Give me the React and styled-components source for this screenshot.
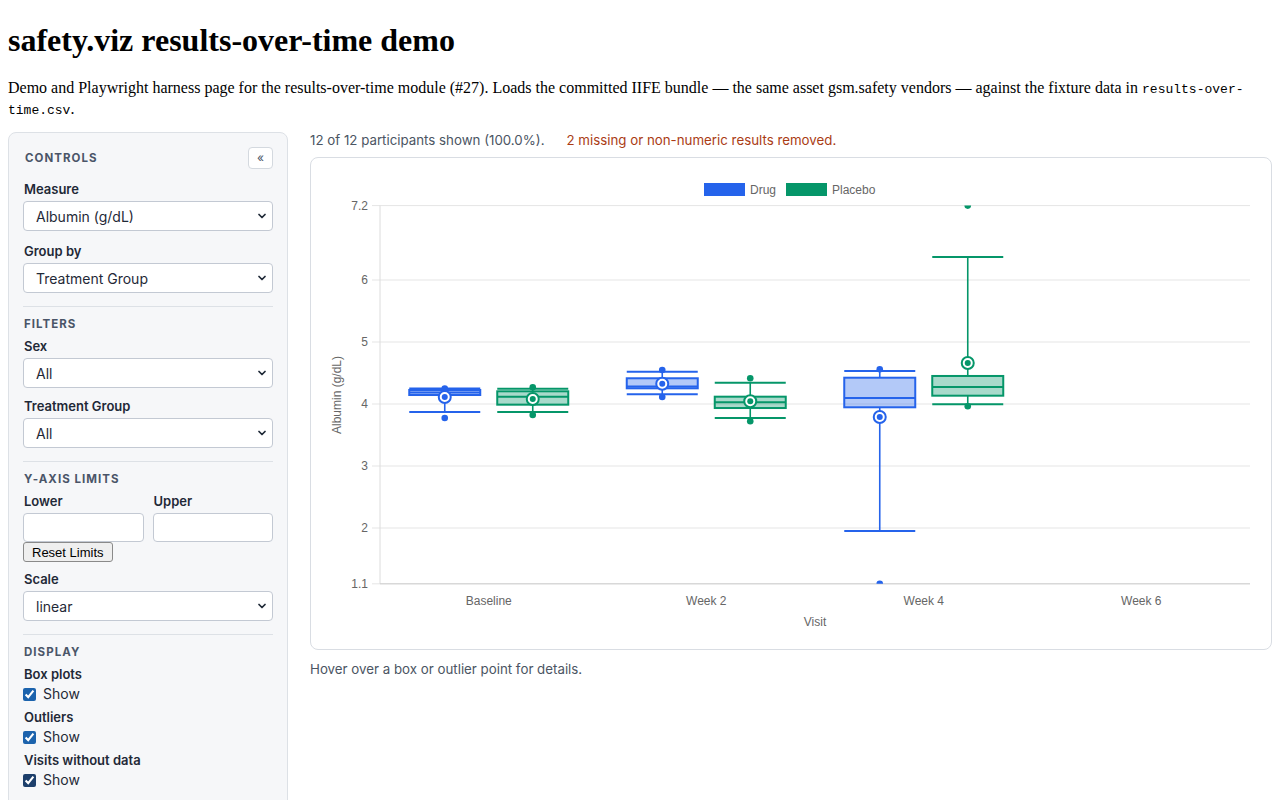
import React from 'react'
import styled, { createGlobalStyle } from 'styled-components'
import { ChevronDown } from 'lucide-react'

const UI = `Inter, "Noto Sans", "Liberation Sans", sans-serif`
const CHART_FONT = `"Liberation Sans", Arial, sans-serif`

const GlobalStyle = createGlobalStyle`
  body {
    margin: 8px;
    font-family: "Liberation Serif", "Times New Roman", serif;
    color: #000;
    background: #fff;
  }
`

const Title = styled.h1`
  font-size: 32px;
  font-weight: bold;
  margin: 14px 0 19px;
`

const Intro = styled.p`
  font-size: 16px;
  margin: 0 0 12px;
  line-height: 19px;

  code {
    font-family: "Liberation Mono", "DejaVu Sans Mono", monospace;
    font-size: 13px;
  }
`

const Layout = styled.div`
  display: flex;
  align-items: flex-start;
  gap: 22px;
`

const Panel = styled.aside`
  width: 280px;
  flex: none;
  box-sizing: border-box;
  padding: 14px 14px 20px;
  background: #f6f7f9;
  border: 1px solid #dde1e6;
  border-radius: 8px;
  font-family: ${UI};
  display: flex;
  flex-direction: column;
`

const PanelHead = styled.div`
  display: flex;
  align-items: center;
  justify-content: space-between;
  height: 22px;
  padding-left: 1px;
`

const SectionTitle = styled.div`
  font-size: 11.5px;
  font-weight: 700;
  letter-spacing: 0.09em;
  text-transform: uppercase;
  color: #4a5568;
  line-height: 16px;
  padding-left: 1px;
`

const Collapse = styled.button`
  width: 25px;
  height: 22px;
  padding: 0;
  background: #fff;
  border: 1px solid #d4d9df;
  border-radius: 4px;
  color: #4a5568;
  font-size: 12px;
  font-family: ${UI};
  line-height: 1;
`

const Field = styled.div`
  display: flex;
  flex-direction: column;
  margin-top: ${p => p.$top ?? 10}px;
`

const Label = styled.label`
  font-size: 13px;
  font-weight: 600;
  color: #1f2937;
  line-height: 16px;
  margin-bottom: 4px;
  padding-left: 1px;
`

const SelectWrap = styled.div`
  position: relative;
  height: 30px;
`

const Select = styled.select`
  appearance: none;
  width: 100%;
  height: 100%;
  box-sizing: border-box;
  padding: 0 30px 0 12px;
  background: #fff;
  border: 1px solid #c3c9d3;
  border-radius: 4px;
  font-family: ${UI};
  font-size: 14px;
  color: #1f2937;
`

const Chevron = styled(ChevronDown)`
  position: absolute;
  right: 5px;
  top: 9px;
  pointer-events: none;
  color: #1f2937;
`

const Divider = styled.hr`
  border: 0;
  border-top: 1px solid #dde1e6;
  margin: 13px 0 9px;
  width: 100%;
`

const LimitGrid = styled.div`
  display: grid;
  grid-template-columns: 1fr 1fr;
  column-gap: 9px;
`

const LimitInput = styled.input`
  height: 29px;
  box-sizing: border-box;
  width: 100%;
  background: #fff;
  border: 1px solid #c3c9d3;
  border-radius: 4px;
  font-family: ${UI};
  font-size: 14px;
`

const ResetButton = styled.button`
  align-self: flex-start;
  height: 20px;
  padding: 0 8px;
  background: #efefef;
  border: 1px solid #8a8a8a;
  border-radius: 3px;
  font-family: ${CHART_FONT};
  font-size: 13px;
  color: #000;
`

const CheckRow = styled.label`
  display: flex;
  align-items: center;
  gap: 7px;
  font-size: 14px;
  color: #1f2937;
  line-height: 16px;

  input {
    margin: 0;
    width: 13px;
    height: 13px;
    accent-color: ${p => p.$dark ? '#1d3f6b' : '#1c63ad'};
  }
`

const Main = styled.main`
  flex: 1;
  min-width: 0;
  font-family: ${UI};
`

const Status = styled.div`
  display: flex;
  gap: 22px;
  font-size: 13.3px;
  line-height: 16px;
  color: #4b5563;
`

const Warning = styled.span`
  color: #aa3c15;
`

const ChartCard = styled.div`
  margin-top: 9px;
  background: #fff;
  border: 1px solid #d9dde3;
  border-radius: 8px;
  overflow: hidden;

  svg { display: block; }
`

const Hint = styled.div`
  margin-top: 11px;
  font-size: 13.3px;
  line-height: 16px;
  color: #4b5563;
`

// --- chart ---

const yOf = v => 652 - 62 * v
const PLOT = { left: 380, right: 1250, top: 205.6, bottom: 583.8 }
const VISITS = ['Baseline', 'Week 2', 'Week 4', 'Week 6']
const catX = i => 488.75 + i * 217.5
const TICKS = [7.2, 6, 5, 4, 3, 2, 1.1]

const SERIES = {
  Drug: { stroke: '#2563eb', fill: 'rgba(37,99,235,0.35)', offset: -44 },
  Placebo: { stroke: '#059669', fill: 'rgba(5,150,105,0.35)', offset: 44 },
}

const BOXES = [
  { visit: 0, s: 'Drug', max: 4.25, q3: 4.226, med: 4.185, q1: 4.145, min: 3.871, mean: 4.113, dots: [4.25, 3.774] },
  { visit: 0, s: 'Placebo', max: 4.247, q3: 4.205, med: 4.118, q1: 3.989, min: 3.871, mean: 4.081, dots: [4.269, 3.823] },
  { visit: 1, s: 'Drug', max: 4.521, q3: 4.415, med: 4.282, q1: 4.253, min: 4.156, mean: 4.327, dots: [4.548, 4.113] },
  { visit: 1, s: 'Placebo', max: 4.344, q3: 4.118, med: 4.027, q1: 3.935, min: 3.774, mean: 4.044, dots: [4.415, 3.721] },
  { visit: 2, s: 'Drug', max: 4.532, q3: 4.424, med: 4.097, q1: 3.947, min: 1.952, mean: 3.79, dots: [4.56, 1.1] },
  { visit: 2, s: 'Placebo', max: 6.371, q3: 4.452, med: 4.274, q1: 4.134, min: 3.995, mean: 4.661, dots: [7.2, 3.963] },
]

const BoxPlot = ({ b }) => {
  const { stroke, fill, offset } = SERIES[b.s]
  const cx = catX(b.visit) + offset
  const half = 35.5
  const top = yOf(b.q3)
  const bottom = yOf(b.q1)
  return (
    <g>
      <line x1={cx} x2={cx} y1={yOf(b.max)} y2={top} stroke={stroke} strokeWidth="1.6" />
      <line x1={cx} x2={cx} y1={bottom} y2={yOf(b.min)} stroke={stroke} strokeWidth="1.6" />
      <line x1={cx - half} x2={cx + half} y1={yOf(b.max)} y2={yOf(b.max)} stroke={stroke} strokeWidth="2" />
      <line x1={cx - half} x2={cx + half} y1={yOf(b.min)} y2={yOf(b.min)} stroke={stroke} strokeWidth="2" />
      <rect x={cx - half} y={top} width={half * 2} height={bottom - top} fill={fill} stroke={stroke} strokeWidth="2" />
      <line x1={cx - half} x2={cx + half} y1={yOf(b.med)} y2={yOf(b.med)} stroke={stroke} strokeWidth="2" />
      {b.dots.map((d, i) => (
        <circle key={i} cx={cx} cy={yOf(d)} r="3.3" fill={stroke} />
      ))}
      <circle cx={cx} cy={yOf(b.mean)} r="6" fill="#fff" stroke={stroke} strokeWidth="2" />
      <circle cx={cx} cy={yOf(b.mean)} r="3" fill={stroke} />
    </g>
  )
}

const ResultsChart = () => (
  <svg width="960" height="491" viewBox="311 158 960 491" fontFamily={CHART_FONT} fontSize="12">
    <defs>
      <clipPath id="plot-area">
        <rect x={PLOT.left} y={PLOT.top} width={PLOT.right - PLOT.left} height={PLOT.bottom - PLOT.top} />
      </clipPath>
    </defs>

    {/* legend */}
    <rect x="704.5" y="183.5" width="40" height="12" fill="#2563eb" stroke="#2563eb" />
    <text x="750" y="194" fill="#666">Drug</text>
    <rect x="786.5" y="183.5" width="40" height="12" fill="#059669" stroke="#059669" />
    <text x="832" y="194" fill="#666">Placebo</text>

    {/* grid + y ticks */}
    {TICKS.map(t => (
      <g key={t}>
        <line x1="372" x2={PLOT.right} y1={yOf(t)} y2={yOf(t)} stroke="#e5e5e5" strokeWidth="1" />
        <text x="368" y={yOf(t) + 4} textAnchor="end" fill="#666">{t}</text>
      </g>
    ))}
    <line x1={PLOT.left} x2={PLOT.left} y1={PLOT.top} y2={PLOT.bottom} stroke="#dcdcdc" strokeWidth="1" />
    <line x1={PLOT.left} x2={PLOT.right} y1={PLOT.bottom} y2={PLOT.bottom} stroke="#cfcfcf" strokeWidth="1" />

    {/* x labels */}
    {VISITS.map((v, i) => (
      <text key={v} x={catX(i)} y="605" textAnchor="middle" fill="#666">{v}</text>
    ))}
    <text x="815" y="626" textAnchor="middle" fill="#666">Visit</text>
    <text x="338" y="395" textAnchor="middle" dominantBaseline="middle" transform="rotate(-90 338 395)" fill="#666">
      Albumin (g/dL)
    </text>

    <g clipPath="url(#plot-area)">
      {BOXES.map((b, i) => <BoxPlot key={i} b={b} />)}
    </g>
  </svg>
)

const SelectField = ({ label, value, top }) => (
  <Field $top={top}>
    <Label>{label}</Label>
    <SelectWrap>
      <Select defaultValue={value}>
        <option>{value}</option>
      </Select>
      <Chevron size={12} strokeWidth={3.5} />
    </SelectWrap>
  </Field>
)

const CheckField = ({ label, dark, top }) => (
  <Field $top={top}>
    <Label>{label}</Label>
    <CheckRow $dark={dark}>
      <input type="checkbox" defaultChecked />
      Show
    </CheckRow>
  </Field>
)

export default function App() {
  return (
    <>
      <GlobalStyle />
      <Title>safety.viz results-over-time demo</Title>
      <Intro>
        Demo and Playwright harness page for the results-over-time module (#27). Loads the committed IIFE
        bundle — the same asset gsm.safety vendors — against the fixture data in <code>results-over-time.csv</code>.
      </Intro>

      <Layout>
        <Panel>
          <PanelHead>
            <SectionTitle>Controls</SectionTitle>
            <Collapse>«</Collapse>
          </PanelHead>
          <SelectField label="Measure" value="Albumin (g/dL)" top={12} />
          <SelectField label="Group by" value="Treatment Group" top={12} />

          <Divider />
          <SectionTitle>Filters</SectionTitle>
          <SelectField label="Sex" value="All" top={6} />
          <SelectField label="Treatment Group" value="All" top={10} />

          <Divider />
          <SectionTitle>Y-axis limits</SectionTitle>
          <Field $top={6}>
            <LimitGrid>
              <Label>Lower</Label>
              <Label>Upper</Label>
              <LimitInput />
              <LimitInput />
            </LimitGrid>
            <ResetButton>Reset Limits</ResetButton>
          </Field>
          <SelectField label="Scale" value="linear" top={9} />

          <Divider />
          <SectionTitle>Display</SectionTitle>
          <CheckField label="Box plots" top={6} />
          <CheckField label="Outliers" top={7} />
          <CheckField label="Visits without data" top={7} dark />
        </Panel>

        <Main>
          <Status>
            <span>12 of 12 participants shown (100.0%).</span>
            <Warning>2 missing or non-numeric results removed.</Warning>
          </Status>
          <ChartCard>
            <ResultsChart />
          </ChartCard>
          <Hint>Hover over a box or outlier point for details.</Hint>
        </Main>
      </Layout>
    </>
  )
}
